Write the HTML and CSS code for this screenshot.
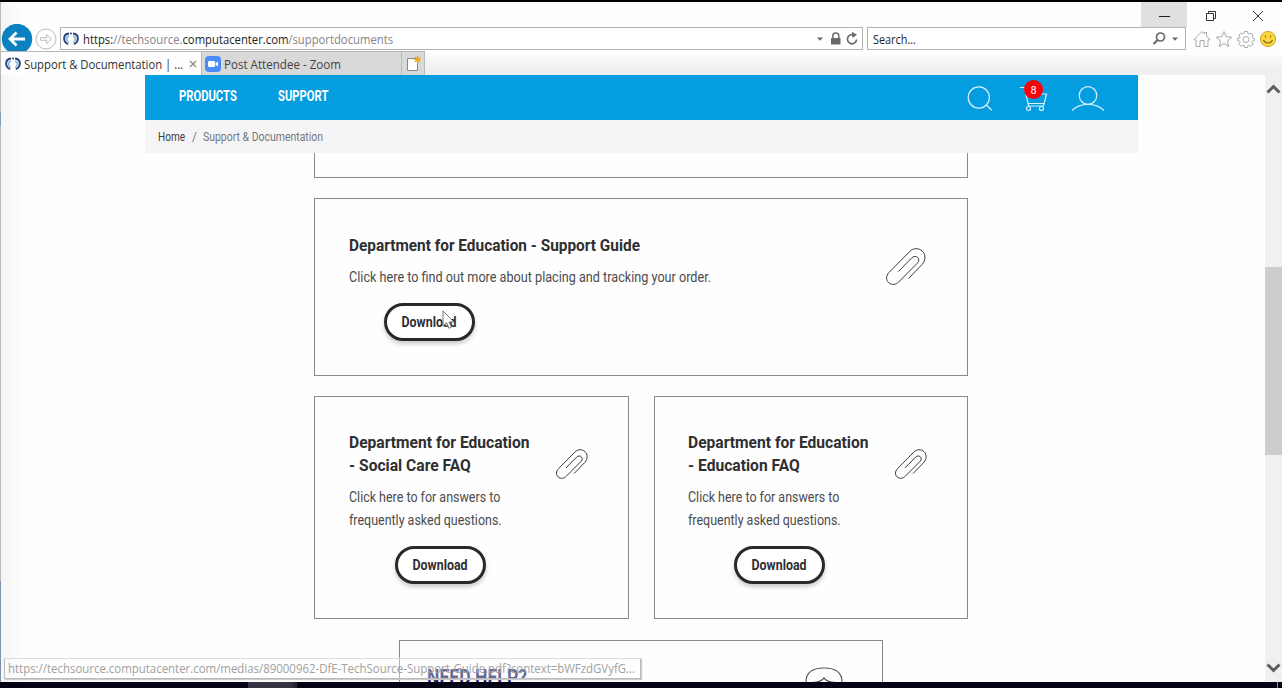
FILE: index.html
```
<!DOCTYPE html>
<html lang="en">
<head>
<meta charset="utf-8">
<title>Support &amp; Documentation</title>
<link rel="stylesheet" href="styles.css">
</head>
<body>
<svg class="defs" width="0" height="0">
  <symbol id="brand" viewBox="0 0 16 14">
    <path d="M6 1.6C2.5 2 1 4.5 1.2 7c.2 2.600 1.800 4.400 4 5" fill="none" stroke="#27477f" stroke-width="2"/>
    <path d="M6 4C4.300 4.500 3.500 5.600 3.600 7.200c.1 1.300.8 2.400 2 3" fill="none" stroke="#8db7d8" stroke-width="1.600"/>
    <path d="M10 1.600c3.500.4 5 2.900 4.800 5.400-.2 2.600-1.800 4.400-4 5" fill="none" stroke="#27477f" stroke-width="2"/>
    <path d="M10 4c1.700.5 2.500 1.600 2.400 3.200-.1 1.300-.8 2.400-2 3" fill="none" stroke="#8db7d8" stroke-width="1.600"/>
    <circle cx="8" cy="1.400" r="1" fill="#27477f"/>
  </symbol>
  <symbol id="clip" viewBox="0 0 40 37">
    <path d="M22.500 30.500 36.300 16.200C39.800 12.400 39.800 6.300 36.300 3.100 32.500-.3 27.300-.1 23.800 3.400L3.300 24.200C-.3 27.800-.1 32.300 2.700 34.700c3.100 2.600 7.200 2.100 10-.7L31.300 15.200c1.900-2 1.900-4.300.3-5.700-1.600-1.500-4-1.400-5.700.3L12.300 23.500" fill="none" stroke="#3a3a3c" vector-effect="non-scaling-stroke"/>
  </symbol>
</svg>
<div class="screen">
  <div class="edge"></div>
  <div class="window">
    <header class="titlebar">
      <div class="winbtn winbtn-hover"><svg width="12" height="12"><path d="M1 6.500h11" stroke="#222"/></svg></div>
      <div class="winbtn"><svg width="12" height="12" fill="none" stroke="#333"><path d="M1.500 3.500h7v7h-7zM3.500 3.500v-2h7v7h-2"/></svg></div>
      <div class="winbtn"><svg width="12" height="12" fill="none" stroke="#333"><path d="M1 1l10 10M11 1L1 11"/></svg></div>
    </header>
    <div class="toolbar">
      <svg class="back" width="32" height="30" viewBox="0 0 32 30"><circle cx="16" cy="15" r="15.200" fill="#0b81c1"/><path d="M24 15H9.500M15.500 8.500 9 15l6.500 6.500" fill="none" stroke="#fff" stroke-width="2.800"/></svg>
      <svg class="forward" width="22" height="22" fill="none" stroke="#bdbdbd"><circle cx="11" cy="11" r="10"/><path d="M5.500 9.700h6.200V6.500l4.800 4.500-4.800 4.500v-3.200H5.500z"/></svg>
      <div class="field address">
        <svg class="brand" width="16" height="14"><use href="#brand"/></svg>
        <span class="url">https:<i>//techsource.</i>computacenter.com<i>/supportdocuments</i></span>
        <svg class="field-tools" width="44" height="16" viewBox="0 0 44 16">
          <path d="M1 6.500h6L4 9.700z" fill="#666"/>
          <path d="M15 7h9.500v6.500H15z" fill="#6a6a6a"/><path d="M16.800 7V5a3 3 0 0 1 6 0v2" fill="none" stroke="#6a6a6a" stroke-width="1.500"/>
          <path d="M38.500 4.300A4.600 4.600 0 1 0 40.600 8.500" fill="none" stroke="#6a6a6a" stroke-width="1.700"/><path d="M36 .8 41 3.800 36.500 7z" fill="#6a6a6a"/>
        </svg>
      </div>
      <div class="field search">
        <span class="search-text">Search...</span>
        <svg class="field-tools search-tools" width="28" height="16" viewBox="0 0 28 16"><circle cx="8.500" cy="6" r="4" fill="none" stroke="#6a6a6a" stroke-width="1.700"/><path d="M5.700 9 1.500 13" stroke="#6a6a6a" stroke-width="2.200"/><path d="M20 6.500h6l-3 3.200z" fill="#666"/></svg>
      </div>
      <div class="browser-icons">
        <svg width="18" height="18" fill="none" stroke="#aaa"><path d="M1 9.500 9 1.500l2.500 2.500V2.500h2v3.500L17 9.500l-2 .5v6.500h-4v-6H7v6H3V10z"/></svg>
        <svg width="18" height="18" fill="none" stroke="#aaa"><path d="m9 1.500 2.100 5.200 5.700.5-4.300 3.800 1.300 5.600L9 13.500l-4.800 3.100 1.300-5.600L1.200 7.200l5.700-.5z"/></svg>
        <svg width="18" height="18" fill="none" stroke="#aaa"><path d="M7.500 1.500h3l.4 2 1.300.5 1.800-1.100 2.100 2.100L15 6.800l.5 1.300 2 .4v2l-2 .6-.5 1.300 1.100 1.800-2.100 2.100-1.800-1.100-1.300.5-.4 1.800h-3l-.4-1.800-1.300-.5L4 16.300l-2.100-2.100L3 12.400l-.5-1.300-2-.6v-2l2-.4L3 6.800 1.900 5 4 2.900 5.800 4l1.300-.5z"/><circle cx="9" cy="9.500" r="3"/></svg>
        <svg width="18" height="18"><circle cx="9" cy="9" r="7.600" fill="#fbd63c" stroke="#cda72a"/><path d="M6.500 5.500v2M11.500 5.500v2M4.500 10c1.700 4 7.300 4 9 0" fill="none" stroke="#8a6a1c" stroke-width="1.200"/></svg>
      </div>
    </div>
    <div class="tabs">
      <div class="tab tab-active">
        <svg class="brand" width="16" height="14"><use href="#brand"/></svg>
        <span class="tab-text tab-text-active">Support &amp; Documentation | ...</span>
        <svg class="tab-close" width="8" height="8"><path d="M1 1l6 6M7 1 1 7" stroke="#888" stroke-width="1.200"/></svg>
      </div>
      <div class="tab tab-zoom">
        <svg width="16" height="16"><rect width="16" height="16" rx="4" fill="#4a8cf7"/><rect x="3" y="5" width="7" height="6" rx="1.300" fill="#fff"/><path d="m10.500 7.300 2.500-1.800v5l-2.500-1.800z" fill="#fff"/></svg>
        <span class="tab-text tab-text-zoom">Post Attendee - Zoom</span>
      </div>
      <div class="tab tab-new">
        <svg width="16" height="16"><path d="M1.500 2.500h10v12h-10z" fill="#fff" stroke="#888"/><path d="M11.500 0v7M8 3.500h7M9 1l5 5M14 1l-5 5" stroke="#f2a91e" stroke-width="1.200"/></svg>
      </div>
    </div>
    <div class="viewport">
      <main class="page">
        <nav class="nav">
          <span class="nav-link nav-products">PRODUCTS</span>
          <span class="nav-link nav-support">SUPPORT</span>
          <div class="nav-icons">
            <svg width="26" height="26" fill="none" stroke="#d9f0fb" stroke-width="1.200"><circle cx="11.800" cy="11.500" r="10.600"/><path d="m19.200 19 5.600 5.300"/></svg>
            <div class="cart">
              <svg width="28" height="26" fill="none" stroke="#d9f0fb" stroke-width="1.200"><path d="M0 1.500h4.500L8.500 20h15L26.500 8H6M8 17.500h16"/><circle cx="8.500" cy="22.500" r="2"/><circle cx="21.500" cy="22.500" r="2"/></svg>
              <span class="badge">8</span>
            </div>
            <svg width="34" height="26" fill="none" stroke="#d9f0fb" stroke-width="1.200"><circle cx="17" cy="9.500" r="8.800"/><path d="M1 24.500c8.500-8.200 23.500-8.200 32 0"/></svg>
          </div>
        </nav>
        <div class="crumbs"><span class="crumb-home">Home</span><span class="crumb-sep">/</span><span class="crumb-current">Support &amp; Documentation</span></div>
        <div class="content">
          <section class="card card-clipped"></section>
          <section class="card card-wide">
            <div class="card-body">
              <h2 class="title">Department for Education - Support Guide</h2>
              <p class="copy">Click here to find out more about placing and tracking your order.</p>
              <button class="download"><span class="label">Download</span></button>
            </div>
            <svg class="clip-large"><use href="#clip"/></svg>
          </section>
          <div class="row">
            <section class="card card-half">
              <div class="card-body">
                <h2 class="title">Department for Education<br>- Social Care FAQ</h2>
                <p class="copy">Click here to for answers to<br>frequently asked questions.</p>
                <button class="download"><span class="label">Download</span></button>
              </div>
              <svg class="clip-small"><use href="#clip"/></svg>
            </section>
            <section class="card card-half card-right">
              <div class="card-body">
                <h2 class="title">Department for Education<br>- Education FAQ</h2>
                <p class="copy">Click here to for answers to<br>frequently asked questions.</p>
                <button class="download"><span class="label">Download</span></button>
              </div>
              <svg class="clip-small"><use href="#clip"/></svg>
            </section>
          </div>
          <section class="card help">
            <h2 class="help-title">NEED HELP?</h2>
            <svg width="38" height="30" fill="none" stroke="#555" stroke-width="1.200"><path d="M1 20v-5C1 5 8 1 19 1s18 4 18 14v5M8 15.500c5 0 8-1 11-4.500 3 3.500 6 4.500 11 4.500"/></svg>
          </section>
        </div>
      </main>
      <div class="scrollbar">
        <svg width="15" height="12" fill="none" stroke="#5c5c5e" stroke-width="3"><path d="m1.500 9.500 6-6 6 6"/></svg>
        <div class="thumb"></div>
        <svg class="scroll-down" width="15" height="12" fill="none" stroke="#5c5c5e" stroke-width="3"><path d="m1.500 2.500 6 6 6-6"/></svg>
      </div>
      <div class="status"><span class="status-text">https://techsource.computacenter.com/medias/89000962-DfE-TechSource-Support-Guide.pdf?context=bWFzdGVyfG...</span></div>
    </div>
  </div>
  <div class="taskbar"><div class="task"></div><div class="task-end"></div></div>
  <svg class="pointer" width="14" height="20"><path d="M1 1v15l3.500-3.200 2.500 5.500 2.500-1.200-2.500-5.100H12z" fill="#fff" stroke="#666" stroke-width=".9"/></svg>
</div>
</body>
</html>
```
FILE: styles.css
```
* { box-sizing: border-box; }
body { margin: 0; background: #fefefe; font-family: Roboto, sans-serif; color: #2f2f31; }
svg { display: block; flex: none; }
h2, p { margin: 0; }
.defs { position: absolute; }

.screen {
  position: relative;
  display: grid;
  grid-template: 680px 6px / 1px 1281px;
  width: 1282px;
  height: 688px;
  overflow: hidden;
  border-top: 2px solid #000;
}
.edge { background: linear-gradient(#b9b9b9 0 110px, #7fa3b5 110px 124px, #b9b9b9 124px 579px, #7f90b0 579px); }
.window { display: flex; flex-direction: column; min-width: 0; background: linear-gradient(90deg, #f5f5f5, #fefefe 26px); }
.taskbar { grid-column: 1 / 3; display: flex; justify-content: space-between; padding: 0 4px 0 248px; background: #020212; }
.task { width: 49px; background: #343240; border-right: 4px solid #24222e; }
.task-end { width: 1px; background: #888; }

.titlebar { display: flex; justify-content: flex-end; height: 25px; padding-right: 1px; }
.winbtn { display: flex; justify-content: center; align-items: center; width: 47px; height: 28px; }
.winbtn-hover { width: 46px; height: 25px; background: #e0e0e0; }
.winbtn-hover svg { margin-top: 3px; }

.toolbar { display: flex; align-items: center; height: 24px; padding-left: 1px; }
.back { margin: -4px 0 -4px -1px; }
.forward { margin: -1px 1px 0 2px; }
.field { display: flex; align-items: center; height: 23px; margin-bottom: 1px; border: 1px solid #b3b3b3; background: #fff; font: 13px "Open Sans", sans-serif; color: #1e1e1e; white-space: nowrap; }
.address { width: 803px; margin-left: 2px; padding-left: 2px; }
.search { width: 319px; margin-left: 4px; padding-left: 5px; }
.url { width: 310px; margin-left: 4px; transform: scaleX(.867); transform-origin: left; }
.url i { font-style: normal; color: #858585; }
.search-text { transform: scaleX(.836); transform-origin: left; }
.field-tools { margin-left: auto; margin-right: 2px; }
.search-tools { margin-right: 5px; }
.browser-icons { display: flex; gap: 4px; margin-left: 7px; }

.tabs { display: flex; height: 24px; background: linear-gradient(#fefefe 10%, #efeef0 75%); }
.tab { display: flex; align-items: center; height: 24px; border: 1px solid #b9b9b9; border-bottom: 0; background: #d9d9d9; font: 13px "Open Sans", sans-serif; color: #444; white-space: nowrap; }
.tab-active { width: 201px; padding-left: 4px; border-left: 0; background: #fefefe; color: #333; }
.tab-zoom { width: 200px; padding-left: 3px; border-left: 0; }
.tab-new { width: 23px; padding-left: 4px; border-left: 0; }
.tab-text { margin-left: 3px; transform-origin: left; }
.tab-text-active { width: 159px; transform: scaleX(.867); }
.tab-text-zoom { transform: scaleX(.892); }
.tab-close { margin-left: 6px; }

.viewport { position: relative; display: flex; justify-content: space-between; height: 607px; overflow: hidden; }
.page { width: 993px; margin-left: 144px; }
.nav { display: flex; align-items: center; height: 45px; padding: 0 33px 3px 34px; background: #039de0; color: #fff; }
.nav-link { font-size: 14px; font-weight: 700; transform: scaleX(.802); transform-origin: left; }
.nav-products { width: 98.5px; }
.nav-icons { display: flex; margin: 5px 0 0 auto; }
.cart { position: relative; margin: 0 23px 0 27.500px; }
.badge { position: absolute; left: 4px; top: -6px; width: 19px; height: 19px; border-radius: 50%; background: #fb0007; font: 11px/21px Roboto, sans-serif; text-align: center; }
.crumbs { display: flex; align-items: center; height: 33px; padding-left: 13px; background: #f5f5f8; font-size: 12px; color: #77777a; white-space: nowrap; }
.crumbs span { transform-origin: left; }
.crumb-home { width: 34px; color: #3c3c3e; transform: scaleX(.836); }
.crumb-sep { width: 10.500px; }
.crumb-current { transform: scaleX(.872); }

.content { display: flex; flex-direction: column; gap: 20px; width: 654px; margin-left: 169px; }
.card { display: flex; justify-content: space-between; border: 1px solid #89898b; }
.card-clipped { height: 25px; border-top: 0; }
.card-wide { height: 178px; padding: 35px 41px 0 34px; }
.row { display: flex; justify-content: space-between; height: 223px; }
.card-half { width: 315px; padding: 34px 40px 0 34px; }
.card-right { width: 314px; padding-left: 33px; }
.title { font-size: 17px; line-height: 23px; font-weight: 700; white-space: nowrap; transform: scaleX(.905); transform-origin: left; }
.card-half .title { transform: scaleX(.918); }
.copy { margin-top: 9px; font-size: 14.5px; line-height: 23px; color: #4b4b4d; white-space: nowrap; transform: scaleX(.872); transform-origin: left; }
.card-half .copy { transform: scaleX(.86); }
.card-body { width: 190px; }
.download { display: flex; justify-content: center; align-items: center; width: 91px; height: 38px; margin: 14px 0 0 35px; padding: 0; border: 3px solid #29292b; border-radius: 19px; background: #fff; box-shadow: 0 3px 4px rgba(0, 0, 0, .2); color: #2f2f31; }
.card-half .download { margin-left: 46px; }
.label { font: 700 14px Roboto, sans-serif; transform: scaleX(.886); }
.clip-large { width: 40px; height: 37px; margin-top: 14px; }
.clip-small { width: 32px; height: 30px; margin-top: 18px; }
.help { width: 484px; height: 110px; margin: 1px 0 0 85px; padding: 26px 39px 0 27px; }
.help-title { font-size: 22px; line-height: 22px; color: #14185f; transform: scaleX(.8); transform-origin: left; }

.scrollbar { display: flex; flex-direction: column; align-items: center; width: 17px; background: #f0eff2; padding-top: 8px; }
.thumb { width: 17px; height: 188px; margin-top: 172px; background: #cdcccf; }
.scroll-down { margin: auto 0 8px; }

.status { position: absolute; left: 3px; top: 583px; width: 637px; height: 21px; padding-left: 3px; border: 1px solid #bbb; border-top-color: #ddd; background: rgba(255, 255, 255, .35); box-shadow: 1px 1px 1px #ccc; font: 13px/19px "Open Sans", sans-serif; color: #a0a0a0; white-space: nowrap; }
.status-text { display: inline-block; transform: scaleX(.879); transform-origin: left; }
.pointer { position: absolute; left: 442px; top: 308px; }
```
